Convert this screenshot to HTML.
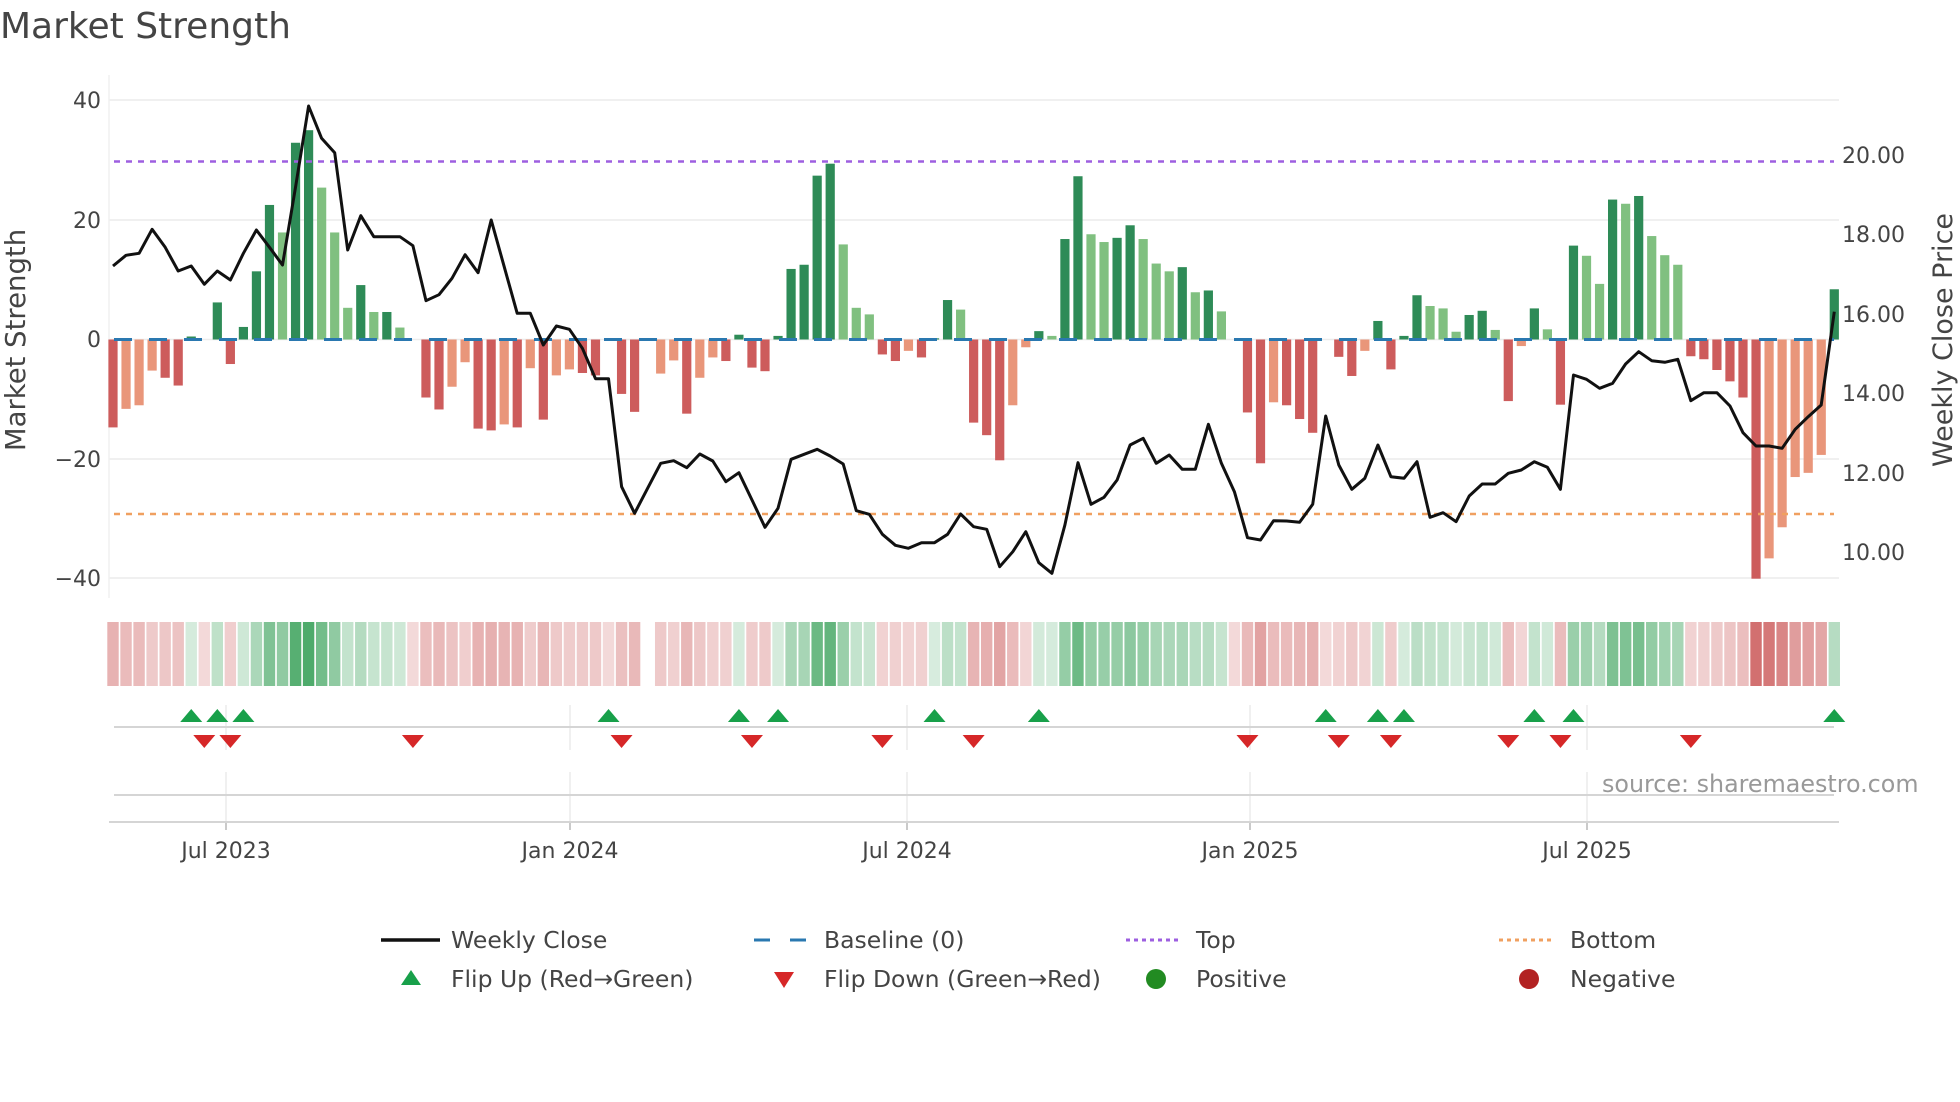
<!DOCTYPE html>
<html><head><meta charset="utf-8"><style>
html,body{margin:0;padding:0;background:#fff;width:1960px;height:1102px;overflow:hidden}
svg{display:block}
text{font-family:"DejaVu Sans","Liberation Sans",sans-serif;fill:#444}
</style></head><body>
<svg id="s" width="1960" height="1102" viewBox="0 0 1960 1102" xmlns="http://www.w3.org/2000/svg">
<text x="0" y="38" font-size="36">Market Strength</text>
<g id="grid"></g>
<g id="strip"></g>
<g id="bars"></g>
<line x1="114" y1="161.5" x2="1834" y2="161.5" stroke="#9d5fe0" stroke-width="2.5" stroke-dasharray="6,6"/>
<line x1="114" y1="514" x2="1834" y2="514" stroke="#f0a060" stroke-width="2.5" stroke-dasharray="6,6"/>
<line x1="114" y1="339.5" x2="1834" y2="339.5" stroke="#2a78b0" stroke-width="3" stroke-dasharray="18,17"/>
<polyline id="price" fill="none" stroke="#111" stroke-width="3" stroke-linejoin="round"/>
<g id="marks"></g>
<g font-size="22" text-anchor="end">
<text x="101" y="108">40</text><text x="101" y="228">20</text><text x="101" y="347">0</text><text x="101" y="467">−20</text><text x="101" y="586">−40</text>
</g>
<g font-size="22">
<text x="1842" y="163">20.00</text><text x="1842" y="242">18.00</text><text x="1842" y="322">16.00</text><text x="1842" y="401">14.00</text><text x="1842" y="481">12.00</text><text x="1842" y="560">10.00</text>
</g>
<text font-size="27.5" transform="translate(25,340) rotate(-90)" text-anchor="middle">Market Strength</text>
<text font-size="27" transform="translate(1952,340) rotate(-90)" text-anchor="middle">Weekly Close Price</text>
<g font-size="22" text-anchor="middle">
<text x="226" y="858">Jul 2023</text><text x="570" y="858">Jan 2024</text><text x="907" y="858">Jul 2024</text><text x="1250" y="858">Jan 2025</text><text x="1587" y="858">Jul 2025</text>
</g>
<text x="1602" y="792" font-size="23.8" style="fill:#999">source: sharemaestro.com</text>
<g font-size="23.5">
<line x1="381" y1="940" x2="440" y2="940" stroke="#111" stroke-width="3.5"/>
<text x="451" y="948">Weekly Close</text>
<line x1="754" y1="940" x2="808" y2="940" stroke="#2a78b0" stroke-width="3" stroke-dasharray="16,20"/>
<text x="824" y="948">Baseline (0)</text>
<line x1="1126" y1="940" x2="1181" y2="940" stroke="#9d5fe0" stroke-width="3" stroke-dasharray="4,4"/>
<text x="1196" y="948">Top</text>
<line x1="1499" y1="940" x2="1554" y2="940" stroke="#f0a060" stroke-width="3" stroke-dasharray="4,4"/>
<text x="1570" y="948">Bottom</text>
<polygon points="401,985 421,985 411,970" fill="#18a04a"/>
<text x="451" y="987">Flip Up (Red→Green)</text>
<polygon points="774,972 794,972 784,988" fill="#d62728"/>
<text x="824" y="987">Flip Down (Green→Red)</text>
<circle cx="1156" cy="979" r="10" fill="#228b22"/>
<text x="1196" y="987">Positive</text>
<circle cx="1529" cy="979" r="10" fill="#b22222"/>
<text x="1570" y="987">Negative</text>
</g>
</svg>
<script>
const NS="http://www.w3.org/2000/svg";
function el(p,t,a){const e=document.createElementNS(NS,t);for(const k in a)e.setAttribute(k,a[k]);p.appendChild(e);return e;}
const V="-14.7R -11.6r -11r -5.2r -6.4R -7.7R .5G 0 6.2G -4.1R 2.1G 11.4G 22.5G 17.9g 32.9G 35G 25.4g 17.9g 5.3g 9.1G 4.6g 4.6G 2g 0 -9.7R -11.7R -7.9r -3.8r -14.9R -15.2R -14.2r -14.7R -4.8r -13.4R -6r -5r -5.6R -6R 0 -9.1R -12.1R 0 -5.7r -3.5r -12.4R -6.4r -3r -3.6R .8G -4.7R -5.3R .6G 11.8G 12.5G 27.4G 29.4G 15.9g 5.3g 4.2g -2.5R -3.6R -1.9r -3R .2G 6.6G 5g -13.9R -16R -20.2R -11r -1.3r 1.4G .6g 16.8G 27.3G 17.6g 16.3g 17G 19.1G 16.8g 12.7g 11.4g 12.1G 7.9g 8.2G 4.7g 0 -12.2R -20.7R -10.5r -11R -13.3R -15.6R 0 -2.9R -6.1R -1.9r 3.1G -5R .6G 7.4G 5.6g 5.2g 1.3g 4.1G 4.8G 1.6g -10.3R -1.1r 5.2G 1.7g -10.9R 15.7G 14g 9.3g 23.4G 22.7g 24G 17.3g 14.1g 12.5g -2.8R -3.3R -5.1R -7R -9.7R -40R -36.6r -31.4r -23r -22.3r -19.3r 8.4G".split(" ");
const P=[528,496,490,418,472,543,528,583,543,570,490,420,472,525,290,48,145,188,480,377,440,440,440,467,632,614,565,494,548,390,530,670,670,765,708,718,775,866,866,1190,1270,1195,1120,1112,1133,1092,1113,1175,1148,1230,1312,1255,1108,1093,1078,1098,1122,1262,1273,1333,1366,1375,1358,1358,1333,1272,1310,1318,1430,1385,1325,1418,1450,1305,1118,1243,1222,1170,1065,1045,1120,1095,1138,1138,1003,1120,1205,1343,1350,1292,1293,1297,1243,978,1125,1198,1165,1065,1160,1165,1115,1282,1268,1295,1218,1182,1182,1150,1140,1115,1132,1198,855,868,895,880,822,785,812,817,808,932,908,908,948,1028,1068,1068,1075,1018,980,945,665];
const X=i=>113+13.04*i, Z=339.5, U=5.98;
const C={G:"#2e8b57",g:"#80c080",R:"#cd5c5c",r:"#e9967a"};
const g=document.getElementById("grid");
[100,220,339.5,459,578].forEach(y=>el(g,"line",{x1:109,x2:1839,y1:y,y2:y,stroke:"#ececec","stroke-width":1.5}));
el(g,"line",{x1:109,x2:109,y1:75,y2:598,stroke:"#f0f0f0","stroke-width":1.5});
[226,570,907,1250,1587].forEach(x=>{el(g,"line",{x1:x,x2:x,y1:705,y2:750,stroke:"#e6e6e6","stroke-width":1.2});el(g,"line",{x1:x,x2:x,y1:772,y2:830,stroke:"#e6e6e6","stroke-width":1.2});el(g,"line",{x1:x,x2:x,y1:822,y2:830,stroke:"#bbb","stroke-width":1.5});});
el(g,"line",{x1:114,x2:1834,y1:727,y2:727,stroke:"#d5d5d5","stroke-width":2});
el(g,"line",{x1:114,x2:1834,y1:795,y2:795,stroke:"#d5d5d5","stroke-width":2});
el(g,"line",{x1:109,x2:1839,y1:822,y2:822,stroke:"#d5d5d5","stroke-width":2});
const b=document.getElementById("bars"),s=document.getElementById("strip");
let pts=[];
V.forEach((t,i)=>{const v=parseFloat(t),c=t.slice(-1),x=X(i);
 if(v!==0&&C[c]){const h=Math.abs(v)*U;el(b,"rect",{x:x-4.6,width:9.2,y:v>0?Z-h:Z,height:Math.max(h,1),fill:C[c]});}
 let a,col;
 if(i===41){col="#fff";a=1;}
 else if(v>0){col="34,150,70";a=0.18+0.62*Math.min(v/35,1);}
 else{col="200,80,80";a=0.22+0.6*Math.min(-v/40,1);}
 el(s,"rect",{x:x-5.7,width:11.4,y:622,height:64,fill:i===41?"#fff":"rgba("+col+","+a.toFixed(2)+")"});
 pts.push(x.toFixed(1)+","+(90+P[i]/3).toFixed(1));
});
document.getElementById("price").setAttribute("points",pts.join(" "));
const m=document.getElementById("marks");
[6,8,10,38,48,51,63,71,93,97,99,109,112,132].forEach(i=>{const x=X(i);el(m,"polygon",{points:(x-11)+",722 "+(x+11)+",722 "+x+",709",fill:"#18a04a"});});
[7,9,23,39,49,59,66,87,94,98,107,111,121].forEach(i=>{const x=X(i);el(m,"polygon",{points:(x-11)+",735 "+(x+11)+",735 "+x+",748",fill:"#d62728"});});
</script>
</body></html>
